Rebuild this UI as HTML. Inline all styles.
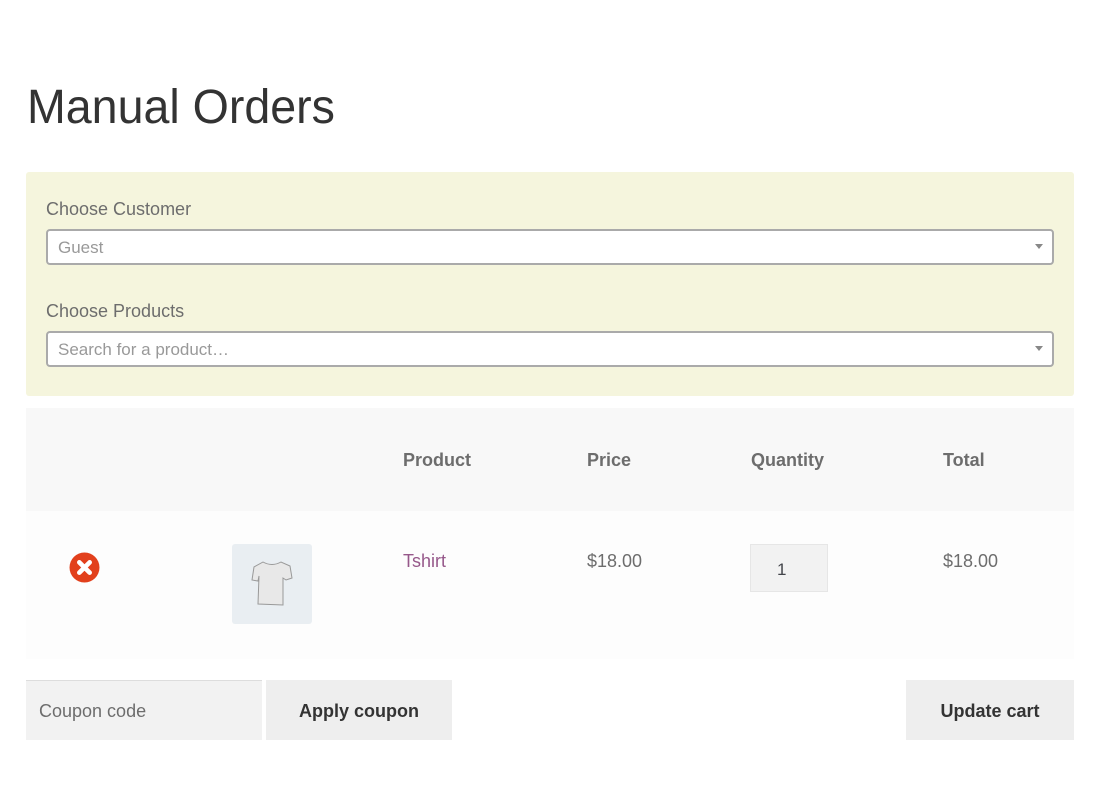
<!DOCTYPE html>
<html><head><meta charset="utf-8"><style>
*{box-sizing:border-box;margin:0;padding:0}
body{width:1106px;height:804px;background:#fff;font-family:"Liberation Sans",sans-serif;color:#6d6d6d;position:relative;overflow:hidden}
.a{position:absolute;white-space:nowrap}
h1{position:absolute;left:27px;top:80px;font-weight:normal;font-size:48px;color:#333;transform:scaleX(0.97);transform-origin:left}
.box{position:absolute;left:26px;top:172px;width:1048px;height:224px;background:#f5f5dd;border-radius:3px}
.lbl{font-size:18px;color:#6d6d6d}
.sel{position:absolute;left:46px;width:1008px;height:36px;background:#fff;border:2px solid #aaa;border-radius:4px;font-size:17px;color:#999;padding:7px 10px}
.sel:after{content:"";position:absolute;right:9px;top:13px;border:4px solid transparent;border-top:5px solid #888}
.th{font-weight:bold;font-size:18px;color:#6d6d6d}
.td{font-size:18px;color:#6d6d6d}
</style></head><body>
<h1>Manual Orders</h1>
<div class="box"></div>
<div class="a lbl" style="left:46px;top:199px">Choose Customer</div>
<div class="sel" style="top:229px">Guest</div>
<div class="a lbl" style="left:46px;top:301px">Choose Products</div>
<div class="sel" style="top:331px">Search for a product…</div>
<div class="a" style="left:26px;top:408px;width:1048px;height:103px;background:#f8f8f8"></div>
<div class="a" style="left:26px;top:511px;width:1048px;height:148px;background:#fdfdfd"></div>
<div class="a th" style="left:403px;top:450px">Product</div>
<div class="a th" style="left:587px;top:450px">Price</div>
<div class="a th" style="left:751px;top:450px">Quantity</div>
<div class="a th" style="left:943px;top:450px">Total</div>
<svg class="a" style="left:69px;top:552px" width="31" height="31" viewBox="0 0 30 30"><circle cx="15" cy="15" r="14.5" fill="#e2401c"/><path d="M10 10L20 20M20 10L10 20" stroke="#fff" stroke-width="4.5" stroke-linecap="round"/></svg>
<div class="a" style="left:232px;top:544px;width:80px;height:80px;background:#e9eef2;border-radius:3px"></div>
<svg class="a" style="left:246px;top:558px" width="52" height="52" viewBox="0 0 52 52"><path d="M17 4L8 9 6 22 12 23 13 18 12 46 37 47 37 20 40 22 46 20 44 8 35 4Q26 9 17 4Z" fill="#e8e8e8" stroke="#999" stroke-width="1"/></svg>
<div class="a td" style="left:403px;top:551px;color:#96588a">Tshirt</div>
<div class="a td" style="left:587px;top:551px">$18.00</div>
<div class="a" style="left:750px;top:544px;width:78px;height:48px;background:#f2f2f2;border:1px solid #e6e6e6;font-size:17px;color:#43454b;padding:15px 0 0 26px">1</div>
<div class="a td" style="left:943px;top:551px">$18.00</div>
<div class="a" style="left:26px;top:680px;width:236px;height:60px;background:#f2f2f2;border-top:1px solid #ddd;font-size:18px;color:#6d6d6d;padding:20px 0 0 13px">Coupon code</div>
<div class="a" style="left:266px;top:680px;width:186px;height:60px;background:#eee;font-size:18px;font-weight:bold;color:#333;text-align:center;padding-top:21px">Apply coupon</div>
<div class="a" style="left:906px;top:680px;width:168px;height:60px;background:#eee;font-size:18px;font-weight:bold;color:#333;text-align:center;padding-top:21px">Update cart</div>
</body></html>
